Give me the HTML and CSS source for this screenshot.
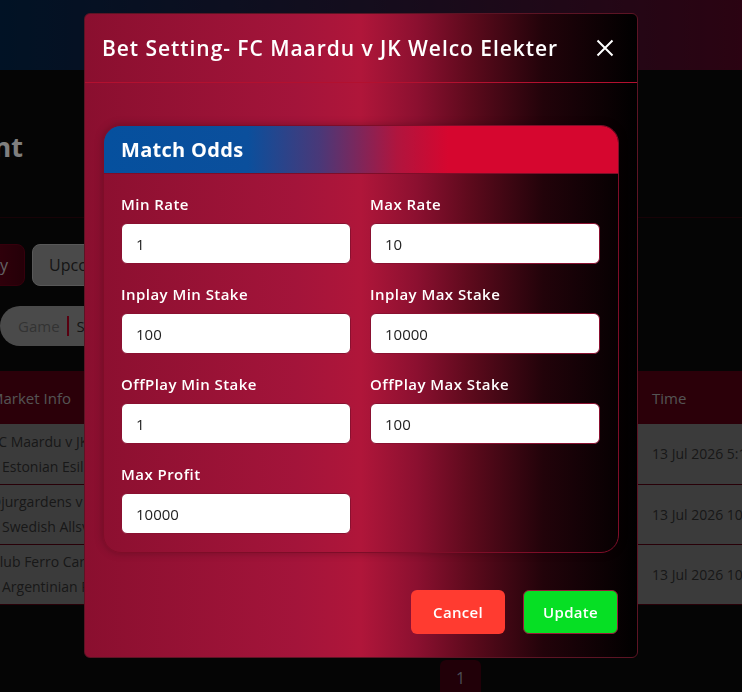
FILE: index.html
```html
<!DOCTYPE html>
<html lang="en">
<head>
    <meta charset="UTF-8">
    <meta name="viewport" content="width=device-width, initial-scale=1.0">
    <title>Bet Setting</title>
    <link rel="stylesheet" href="styles.css">
</head>
<body>
    <div class="page">
        <header class="topbar"></header>
        <main class="content">
            <h2 class="page-title">Event</h2>
            <div class="tabs">
                <button class="tab active">Inplay</button>
                <button class="tab">Upcoming</button>
            </div>
            <div class="search">
                <span class="search-type">Game</span>
                <span class="search-text">Search market</span>
            </div>
            <table class="markets">
                <thead>
                    <tr>
                        <th class="col-info">Market Info</th>
                        <th class="col-type">Market Type</th>
                        <th class="col-status">Status</th>
                        <th class="col-time">Time</th>
                    </tr>
                </thead>
                <tbody>
                    <tr>
                        <td><div>FC Maardu v JK Welco Elekter</div><div class="sub">Estonian Esiliiga</div></td>
                        <td>Match Odds</td>
                        <td>Open</td>
                        <td>13 Jul 2026 5:15 PM</td>
                    </tr>
                    <tr>
                        <td><div>Djurgardens v Hammarby</div><div class="sub">Swedish Allsvenskan</div></td>
                        <td>Match Odds</td>
                        <td>Open</td>
                        <td>13 Jul 2026 10:30 PM</td>
                    </tr>
                    <tr>
                        <td><div>Club Ferro Carril Oeste v Atlanta</div><div class="sub">Argentinian Primera B</div></td>
                        <td>Match Odds</td>
                        <td>Open</td>
                        <td>13 Jul 2026 10:40 PM</td>
                    </tr>
                </tbody>
            </table>
            <div class="pager"><span class="page-num">1</span></div>
        </main>
    </div>

    <div class="backdrop"></div>

    <div class="modal-wrap">
        <div class="modal">
            <div class="modal-header">
                <h3 class="modal-title">Bet Setting- FC Maardu v JK Welco Elekter</h3>
                <button class="close-btn" aria-label="Close">
                    <svg width="18" height="18" viewBox="0 0 18 18">
                        <path d="M1.5 1.5 L16.5 16.5 M16.5 1.5 L1.5 16.5" stroke="#fff" stroke-width="2" fill="none"/>
                    </svg>
                </button>
            </div>
            <div class="modal-body">
                <div class="odds-card">
                    <div class="odds-head">Match Odds</div>
                    <div class="odds-body">
                        <div class="field">
                            <label>Min Rate</label>
                            <input type="text" value="1">
                        </div>
                        <div class="field">
                            <label>Max Rate</label>
                            <input type="text" value="10">
                        </div>
                        <div class="field">
                            <label>Inplay Min Stake</label>
                            <input type="text" value="100">
                        </div>
                        <div class="field">
                            <label>Inplay Max Stake</label>
                            <input type="text" value="10000">
                        </div>
                        <div class="field">
                            <label>OffPlay Min Stake</label>
                            <input type="text" value="1">
                        </div>
                        <div class="field">
                            <label>OffPlay Max Stake</label>
                            <input type="text" value="100">
                        </div>
                        <div class="field">
                            <label>Max Profit</label>
                            <input type="text" value="10000">
                        </div>
                    </div>
                </div>
            </div>
            <div class="modal-footer">
                <button class="btn btn-cancel">Cancel</button>
                <button class="btn btn-update">Update</button>
            </div>
        </div>
    </div>
</body>
</html>
```

FILE: styles.css
```css
* {
    box-sizing: border-box;
}
body {
    margin: 0;
    font-family: "Open Sans", Arial, sans-serif;
    background-color: #0a0a0a;
    overflow: hidden;
    height: 692px;
}
.page {
    width: 742px;
}
.topbar {
    height: 70px;
    background: linear-gradient(90deg, #02254a 0%, #2a1a3a 50%, #560724 100%);
}
.content {
    margin-left: -40px;
    width: 1000px;
}
.page-title {
    margin: 0 0 0 -13px;
    padding: 58px 0 0 0;
    height: 148px;
    color: #fff;
    font-size: 27px;
    font-weight: 700;
    border-bottom: 1px solid #30070f;
}
.tabs {
    display: flex;
    gap: 7px;
    margin: 26px 0 0 -14px;
}
.tab {
    height: 42px;
    padding: 0 16px;
    border-radius: 8px;
    font-family: inherit;
    font-size: 16px;
    border: 1px solid #b0b0b0;
    background-color: #959595;
    color: #2a2a2a;
}
.tab.active {
    background: linear-gradient(90deg, #8a0022, #4a0010);
    border-color: #6a0018;
    color: #c8c8c8;
}
.search {
    display: flex;
    align-items: center;
    width: 320px;
    height: 40px;
    margin: 20px 0 0 40px;
    padding: 0 18px;
    border-radius: 20px;
    background-color: #959595;
    font-size: 15px;
}
.search-type {
    color: #666;
    padding-right: 7px;
    border-right: 2px solid #b00020;
    line-height: 20px;
}
.search-text {
    color: #2a2a2a;
    padding-left: 8px;
}
.markets {
    margin-top: 25px;
    width: 1000px;
    border-collapse: collapse;
    table-layout: fixed;
    font-size: 14px;
}
.markets th {
    height: 53px;
    text-align: left;
    background-color: #560012;
    color: #a8a8a8;
    font-weight: 500;
    font-size: 15px;
    padding: 0 0 0 30px;
}
.markets th.col-time {
    padding-left: 16px;
}
.col-info { width: 300px; }
.col-type { width: 180px; }
.col-status { width: 196px; }
.markets td {
    height: 60px;
    background-color: #777;
    color: #303030;
    padding: 0 0 0 31px;
    border-bottom: 1px solid #500010;
    white-space: nowrap;
    overflow: hidden;
    line-height: 25px;
}
.markets td:last-child {
    padding-left: 16px;
}
.markets td .sub {
    padding-left: 11px;
}
.pager {
    display: flex;
    margin: 55px 0 0 480px;
}
.page-num {
    width: 41px;
    height: 40px;
    border-radius: 6px;
    background-color: #420010;
    color: #9898aa;
    font-size: 16px;
    text-align: center;
    line-height: 36px;
}

/* modal */
.backdrop {
    position: fixed;
    inset: 0;
    background-color: rgba(0, 0, 0, 0.5);
}
.modal-wrap {
    position: fixed;
    inset: 0;
    padding: 13px 0 0 84px;
}
.modal {
    width: 554px;
    border: 1px solid #5c1424;
    border-radius: 6px;
    background: linear-gradient(90deg, #8a0f2f 0%, #a3143a 38%, #b0163a 50%, #8c1030 60%, #5c0a1c 70%, #22030a 83%, #000 100%);
    color: #fff;
}
.modal-header {
    display: flex;
    align-items: center;
    justify-content: space-between;
    height: 69px;
    padding: 0 23px 0 17px;
    border-bottom: 1px solid #b3102f;
}
.modal-title {
    margin: 0;
    font-size: 21px;
    font-weight: 600;
    letter-spacing: 0.95px;
}
.close-btn {
    background: none;
    border: none;
    padding: 0;
    width: 18px;
    height: 18px;
    cursor: pointer;
}
.close-btn svg {
    display: block;
}
.modal-body {
    padding: 42px 18px 18px;
}
.odds-card {
    border: 1px solid #7e0d28;
    border-radius: 18px;
    overflow: hidden;
    box-shadow: 0 0 8px rgba(0, 0, 0, 0.25);
}
.odds-head {
    height: 48px;
    padding: 0 17px;
    display: flex;
    align-items: center;
    font-size: 20px;
    font-weight: 700;
    letter-spacing: 0.3px;
    background: linear-gradient(90deg, #05509e 0%, #0b4f9c 28%, #4a3878 42%, #b0153e 57%, #d6062f 67%, #d6062f 100%);
    border-bottom: 1px solid #7e0d28;
}
.odds-body {
    display: grid;
    grid-template-columns: 1fr 1fr;
    gap: 19px 19px;
    padding: 19px 18px 18px 17px;
}
.field label {
    display: block;
    line-height: 22px;
    margin-bottom: 8px;
    font-size: 15px;
    font-weight: 600;
    letter-spacing: 0.45px;
}
.field input {
    display: block;
    width: 100%;
    height: 41px;
    padding: 0 14px;
    border: 1px solid #8a1030;
    border-radius: 6px;
    background-color: #fff;
    color: #222;
    font-family: inherit;
    font-size: 15px;
}
.modal-footer {
    display: flex;
    justify-content: flex-end;
    gap: 18px;
    padding: 19px 19px 23px;
}
.btn {
    height: 44px;
    border: none;
    border-radius: 6px;
    color: #fff;
    font-family: inherit;
    font-size: 15px;
    font-weight: 600;
    letter-spacing: 0.3px;
    cursor: pointer;
}
.btn-cancel {
    width: 94px;
    background-color: #ff3b30;
}
.btn-update {
    width: 95px;
    background-color: #06df24;
    border: 1px solid #9a1a3a;
}
```
